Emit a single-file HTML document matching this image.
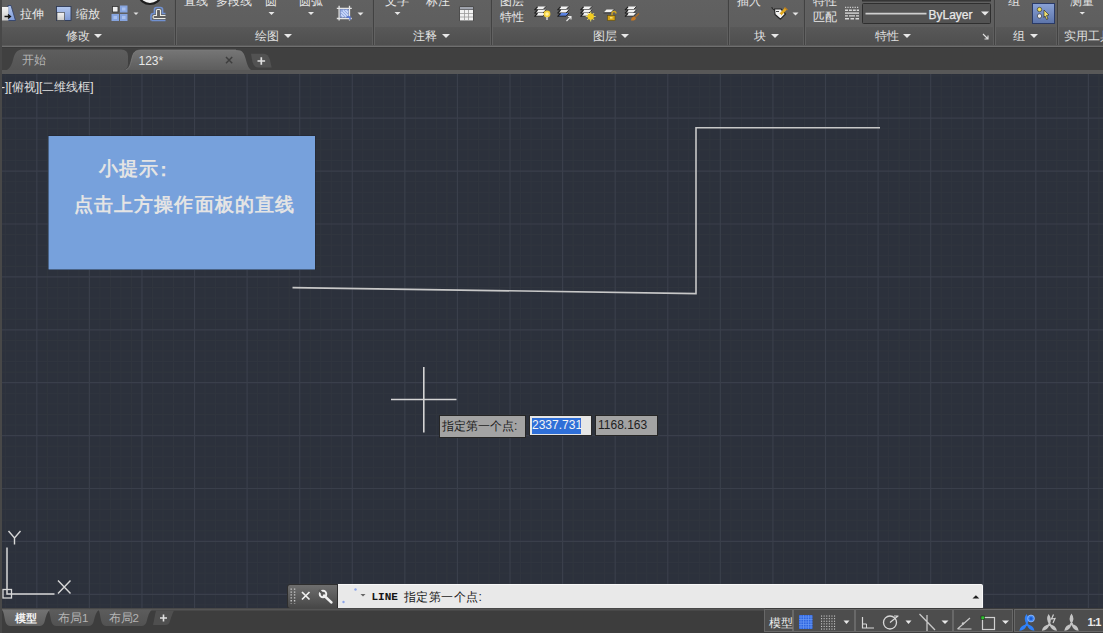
<!DOCTYPE html>
<html><head><meta charset="utf-8">
<style>
*{margin:0;padding:0;box-sizing:border-box}
html,body{width:1103px;height:633px;overflow:hidden;background:#2b303b;font-family:"Liberation Sans",sans-serif}
.a{position:absolute;white-space:nowrap}
#ribbon{position:absolute;left:0;top:0;width:1103px;height:46px;background:linear-gradient(#616161,#5c5c5c)}
#pbar{position:absolute;left:0;top:27px;width:1103px;height:18.5px;background:linear-gradient(#585858,#4e4e4e)}
#rline{position:absolute;left:0;top:45px;width:1103px;height:3px;background:linear-gradient(#5a5a5a 0,#5a5a5a 33%,#6f6f6f 33%,#6f6f6f 66%,#383838 66%)}
.sep{position:absolute;top:0;width:3px;height:45px;border-left:1px solid #5e5e5e;background:#424242;border-right:1px solid #626262}
.rt{color:#e6e6e6;font-size:12px;line-height:14px}
.pt{color:#e0e0e0;font-size:12px;line-height:14px}
.tri{position:absolute;width:0;height:0;border-left:4px solid transparent;border-right:4px solid transparent;border-top:4px solid #e8e8e8}
.tris{position:absolute;width:0;height:0;border-left:3px solid transparent;border-right:3px solid transparent;border-top:3px solid #e0e0e0}
#tabbar{position:absolute;left:0;top:47px;width:1103px;height:27px;background:#3e3e3e}
#draw{position:absolute;left:0;top:74px;width:1103px;height:535px}
#status{position:absolute;left:0;top:608px;width:1103px;height:25px;background:#3f3f3f}
</style></head><body>
<div id="ribbon"></div>
<div id="pbar"></div>
<div id="rline"></div>
<!-- separators -->
<div class="sep" style="left:174px"></div>
<div class="sep" style="left:372px"></div>
<div class="sep" style="left:490px"></div>
<div class="sep" style="left:727px"></div>
<div class="sep" style="left:803px"></div>
<div class="sep" style="left:993px"></div>
<div class="sep" style="left:1056px"></div>

<!-- ribbon top content -->
<svg class="a" style="left:0;top:0" width="1103" height="27" viewBox="0 0 1103 27">
<defs>
<linearGradient id="bl" x1="0" y1="0" x2="0" y2="1"><stop offset="0" stop-color="#b4c8ee"/><stop offset="1" stop-color="#7e9ad6"/></linearGradient>
<linearGradient id="wh" x1="0" y1="0" x2="0" y2="1"><stop offset="0" stop-color="#f4f4f4"/><stop offset="1" stop-color="#c8c8c8"/></linearGradient>
<linearGradient id="btn" x1="0" y1="0" x2="0" y2="1"><stop offset="0" stop-color="#8aa2d6"/><stop offset="1" stop-color="#5c74aa"/></linearGradient>
</defs>
<!-- stretch -->
<path d="M8 5.5 L11 5.5 L15.5 20.5 L8 20.5 Z" fill="url(#bl)" stroke="#2c3c66" stroke-width="0.8"/>
<rect x="1.5" y="7" width="7" height="13.5" fill="url(#wh)"/>
<path d="M4.5 16.5 H9.5 M8 14.5 L10.5 16.5 L8 18.5" stroke="#111" stroke-width="1.3" fill="none"/>
<!-- scale -->
<rect x="56.5" y="6.5" width="14.5" height="14" fill="url(#bl)" stroke="#2f3a55" stroke-width="0.9"/>
<rect x="57" y="12.5" width="7.5" height="8" fill="url(#wh)" stroke="#3a3a3a" stroke-width="0.6"/>
<!-- array -->
<rect x="112.5" y="6.5" width="5.5" height="5.5" fill="#eee" stroke="#333" stroke-width="0.8"/>
<rect x="120" y="5.5" width="7.5" height="7" fill="#86a4de"/><rect x="122" y="7.5" width="3.5" height="3" fill="#a8c0ee"/>
<rect x="111.5" y="14" width="7.5" height="7" fill="#86a4de"/><rect x="113.5" y="16" width="3.5" height="3" fill="#a8c0ee"/>
<rect x="120" y="14" width="7.5" height="7" fill="#86a4de"/><rect x="122" y="16" width="3.5" height="3" fill="#a8c0ee"/>
<path d="M133.5 12.5 H138.5 L136 15 Z" fill="#e0e0e0"/>
<!-- top circle (cut) -->
<ellipse cx="150" cy="-4" rx="10.2" ry="8" fill="#f4f4f4" stroke="#1e1e1e" stroke-width="2.2"/>
<!-- offset -->
<path d="M151 20.5 V16 Q151 13.5 153.5 13.5 H154.5 V9.5 Q154.5 7.5 156.5 7.5 H160.5 Q162.5 7.5 162.5 9.5 V13.5 H165.5 M151.5 20.5 H165.5" fill="none" stroke="#7090d0" stroke-width="1.7"/>
<path d="M165.5 18.5 H154.5 Q153 18.5 153 17 Q153 15.5 154.5 15.5 H156.5 V10.5 Q156.5 9.5 157.5 9.5 H159.5 Q160.5 9.5 160.5 10.5 V15.5 H165.5" fill="none" stroke="#ecece4" stroke-width="1.1"/>
<!-- draw panel arrows -->
<path d="M268.5 12 H274.5 L271.5 15 Z" fill="#e6e6e6"/>
<path d="M308 12 H314 L311 15 Z" fill="#e6e6e6"/>
<path d="M357.5 12.5 H363.5 L360.5 15.5 Z" fill="#e6e6e6"/>
<!-- hatch -->
<rect x="340" y="9" width="9" height="8.8" fill="#c4d2f6" stroke="#344a88" stroke-width="0.9"/>
<path d="M340.5 12 L343.5 9.5 M340.5 9.5 L348.5 17.5 M343.5 9.5 L348.5 14.5 M346.5 9.5 L348.5 11.5 M340.5 12.5 L345.5 17.5 M340.5 15.5 L342.5 17.5" stroke="#8ea6e0" stroke-width="0.9"/>
<path d="M336.8 8.3 H351.8 M336.8 18.5 H351.8 M339.1 5.8 V20.6 M349.5 5.8 V20.6" stroke="#e4e4e4" stroke-width="1.3"/>
<path d="M346.5 17 L350 17 L350 20" stroke="#5070d0" stroke-width="1.4" fill="none"/>
<!-- annot -->
<path d="M394.5 12 H400.5 L397.5 15 Z" fill="#e6e6e6"/>
<rect x="459.5" y="6.5" width="14" height="14.5" fill="#3c3c3c"/>
<rect x="460" y="7" width="13" height="2.5" fill="#a0a4ae"/>
<path d="M460 10 h13 v10.5 h-13 z" fill="#f2f2f2"/>
<path d="M464.5 10 V20.5 M468.5 10 V20.5 M460 13.5 H473 M460 17 H473" stroke="#9a9a9a" stroke-width="0.8"/>
<!-- layer icons -->
<path d="M535 9.7 L538 6.5 L546 6.5 L543 9.7 Z" fill="#f2f2f2"/><path d="M535 9.7 H543 L546 6.5" fill="none" stroke="#1c1c1c" stroke-width="0.9"/><path d="M534.5 10.1 L537.5 6.9" stroke="#1c1c1c" stroke-width="1.2"/><path d="M535 13.0 L538 9.8 L546 9.8 L543 13.0 Z" fill="#f2f2f2"/><path d="M535 13.0 H543 L546 9.8" fill="none" stroke="#1c1c1c" stroke-width="0.9"/><path d="M534.5 13.4 L537.5 10.200000000000001" stroke="#1c1c1c" stroke-width="1.2"/><path d="M535 16.2 L538 13 L546 13 L543 16.2 Z" fill="#f2f2f2"/><path d="M535 16.2 H543 L546 13" fill="none" stroke="#1c1c1c" stroke-width="0.9"/><path d="M534.5 16.6 L537.5 13.4" stroke="#1c1c1c" stroke-width="1.2"/><circle cx="547" cy="14" r="3.4" fill="#f3cf3a"/><circle cx="547" cy="14" r="1.8" fill="#fff2a0"/><path d="M547 17 V20" stroke="#e8e8e8" stroke-width="1.3"/><path d="M558 9.7 L561 6.5 L569 6.5 L566 9.7 Z" fill="#f2f2f2"/><path d="M558 9.7 H566 L569 6.5" fill="none" stroke="#1c1c1c" stroke-width="0.9"/><path d="M557.5 10.1 L560.5 6.9" stroke="#1c1c1c" stroke-width="1.2"/><path d="M558 13.0 L561 9.8 L569 9.8 L566 13.0 Z" fill="#f2f2f2"/><path d="M558 13.0 H566 L569 9.8" fill="none" stroke="#1c1c1c" stroke-width="0.9"/><path d="M557.5 13.4 L560.5 10.200000000000001" stroke="#1c1c1c" stroke-width="1.2"/><path d="M558 16.2 L561 13 L569 13 L566 16.2 Z" fill="#5a82e0"/><path d="M558 16.2 H566 L569 13" fill="none" stroke="#1c1c1c" stroke-width="0.9"/><path d="M557.5 16.6 L560.5 13.4" stroke="#1c1c1c" stroke-width="1.2"/><path d="M566.5 21 L570.5 17 M568 16.5 H571 V19.5" stroke="#e8e8e8" stroke-width="1.1" fill="none"/><path d="M581 9.7 L584 6.5 L592 6.5 L589 9.7 Z" fill="#f2f2f2"/><path d="M581 9.7 H589 L592 6.5" fill="none" stroke="#1c1c1c" stroke-width="0.9"/><path d="M580.5 10.1 L583.5 6.9" stroke="#1c1c1c" stroke-width="1.2"/><path d="M581 13.0 L584 9.8 L592 9.8 L589 13.0 Z" fill="#f2f2f2"/><path d="M581 13.0 H589 L592 9.8" fill="none" stroke="#1c1c1c" stroke-width="0.9"/><path d="M580.5 13.4 L583.5 10.200000000000001" stroke="#1c1c1c" stroke-width="1.2"/><path d="M581 16.2 L584 13 L592 13 L589 16.2 Z" fill="#f2f2f2"/><path d="M581 16.2 H589 L592 13" fill="none" stroke="#1c1c1c" stroke-width="0.9"/><path d="M580.5 16.6 L583.5 13.4" stroke="#1c1c1c" stroke-width="1.2"/><path d="M590.7 11.5 V21.5 M585.7 16.5 H595.7 M587.2 13 L594.2 20 M594.2 13 L587.2 20" stroke="#e8e070" stroke-width="0.9"/><circle cx="590.7" cy="16.5" r="3.2" fill="#f2cc20"/><path d="M603.5 12.8 L606.5 9.5 L614 9.5 L611 12.8 Z" fill="#f2f2f2"/><path d="M603.5 12.8 H611 L614 9.5" fill="none" stroke="#1c1c1c" stroke-width="0.9"/><path d="M612 15.5 V13.5 Q612 11.5 614 11.5 Q616 11.5 616 13.5" fill="none" stroke="#d4a820" stroke-width="1.3"/><rect x="607.5" y="15.5" width="7.5" height="5" fill="#d4a418" stroke="#5a4a10" stroke-width="0.6"/><rect x="610" y="17" width="2.5" height="1.6" fill="#f8e070"/><path d="M625.5 9.7 L628.5 6.5 L636.5 6.5 L633.5 9.7 Z" fill="#f2f2f2"/><path d="M625.5 9.7 H633.5 L636.5 6.5" fill="none" stroke="#1c1c1c" stroke-width="0.9"/><path d="M625.0 10.1 L628.0 6.9" stroke="#1c1c1c" stroke-width="1.2"/><path d="M625.5 13.0 L628.5 9.8 L636.5 9.8 L633.5 13.0 Z" fill="#f2f2f2"/><path d="M625.5 13.0 H633.5 L636.5 9.8" fill="none" stroke="#1c1c1c" stroke-width="0.9"/><path d="M625.0 13.4 L628.0 10.200000000000001" stroke="#1c1c1c" stroke-width="1.2"/><path d="M625.5 16.2 L628.5 13 L636.5 13 L633.5 16.2 Z" fill="#f2f2f2"/><path d="M625.5 16.2 H633.5 L636.5 13" fill="none" stroke="#1c1c1c" stroke-width="0.9"/><path d="M625.0 16.6 L628.0 13.4" stroke="#1c1c1c" stroke-width="1.2"/><path d="M631 20.5 Q631 17 634.5 16.5 L636 18 Q635.5 21 631 20.5 Z" fill="#c87820"/><path d="M635.5 17 L639 13.5" stroke="#a86a28" stroke-width="1.4"/>
<!-- insert block icon -->
<path d="M774.5 9 L781 9 L785.5 14 L780.5 19.2 L775 14.5 Z" fill="#f2f2f2" stroke="#262626" stroke-width="1.2" stroke-linejoin="round"/>
<path d="M771.8 7 Q772 9.5 774.2 10" stroke="#262626" stroke-width="1" fill="none"/>
<path d="M776 11.5 H779" stroke="#333" stroke-width="0.9"/>
<path d="M780.5 14.5 L786 8.5" stroke="#e0a820" stroke-width="2.6"/>
<path d="M784.5 7.5 L787.5 10" stroke="#b87a20" stroke-width="1.2"/>
<circle cx="780" cy="15" r="1" fill="#f0f0f0"/>
<path d="M792.5 12.5 H798.5 L795.5 15.5 Z" fill="#e6e6e6"/>
<!-- linetype icon -->
<path d="M845 7.4 H859" stroke="#d0d0d0" stroke-width="1.1" stroke-dasharray="1.2 1.2"/>
<path d="M845 10.2 H859" stroke="#d8d8d8" stroke-width="1.4" stroke-dasharray="3 0.9"/>
<path d="M845 13.1 H859" stroke="#d8d8d8" stroke-width="1.4"/>
<path d="M845 15.9 H848 M849 15.9 H855 M856 15.9 H859" stroke="#d8d8d8" stroke-width="1.4"/>
<path d="M845 18.7 H849 M850.5 18.7 H854 M855.5 18.7 H859" stroke="#d8d8d8" stroke-width="1.4"/>
<!-- dropdowns -->
<rect x="862.5" y="-4" width="128" height="5" fill="#3c3c3c" stroke="#2e2e2e"/>
<rect x="862.5" y="3.5" width="128" height="20" rx="1" fill="#535353" stroke="#2f2f2f"/>
<path d="M865.5 13.7 H926.5" stroke="#cfcfcf" stroke-width="1.8"/>
<path d="M981 11.5 H989 L985 15.5 Z" fill="#eaeaea"/>
<!-- group select button -->
<rect x="1032.5" y="3.5" width="22" height="20" fill="url(#btn)" stroke="#2a3a66" stroke-width="1"/>
<circle cx="1039.5" cy="9.5" r="2.2" fill="#f0e060" stroke="#222" stroke-width="0.6"/>
<circle cx="1039.5" cy="16" r="2.2" fill="#eee" stroke="#222" stroke-width="0.6"/>
<path d="M1044 10 L1049 15 L1046.5 15.5 L1048 19 L1046.5 19.5 L1045 16 L1044 17.5 Z" fill="#f0e070" stroke="#222" stroke-width="0.6"/>
<path d="M1079.5 12 H1085 L1082.25 14.5 Z" fill="#e6e6e6"/>
</svg>
<div class="a" style="left:20px;top:7px;font-size:12px;line-height:14px;color:#e8e8e8">拉伸</div>
<div class="a" style="left:76px;top:7px;font-size:12px;line-height:14px;color:#e8e8e8">缩放</div>
<div class="a" style="left:184px;top:-6.5px;font-size:12px;line-height:14px;color:#e8e8e8">直线</div>
<div class="a" style="left:216px;top:-6.5px;font-size:12px;line-height:14px;color:#e8e8e8">多段线</div>
<div class="a" style="left:265px;top:-6.5px;font-size:12px;line-height:14px;color:#e8e8e8">圆</div>
<div class="a" style="left:299px;top:-6.5px;font-size:12px;line-height:14px;color:#e8e8e8">圆弧</div>
<div class="a" style="left:385px;top:-6.5px;font-size:12px;line-height:14px;color:#e8e8e8">文字</div>
<div class="a" style="left:426px;top:-6.5px;font-size:12px;line-height:14px;color:#e8e8e8">标注</div>
<div class="a" style="left:500px;top:-6.5px;font-size:12px;line-height:14px;color:#e8e8e8">图层</div>
<div class="a" style="left:500px;top:10px;font-size:12px;line-height:14px;color:#e8e8e8">特性</div>
<div class="a" style="left:737px;top:-6.5px;font-size:12px;line-height:14px;color:#e8e8e8">插入</div>
<div class="a" style="left:813px;top:-6.5px;font-size:12px;line-height:14px;color:#e8e8e8">特性</div>
<div class="a" style="left:813px;top:10px;font-size:12px;line-height:14px;color:#e8e8e8">匹配</div>
<div class="a" style="left:928.5px;top:7.5px;font-size:12px;line-height:15px;color:#e8e8e8;-webkit-text-stroke:0.25px #e8e8e8">ByLayer</div>
<div class="a" style="left:1008px;top:-6.5px;font-size:12px;line-height:14px;color:#e8e8e8">组</div>
<div class="a" style="left:1070px;top:-6.5px;font-size:12px;line-height:14px;color:#e8e8e8">测量</div>
<svg class="a" style="left:982px;top:33px" width="8" height="8" viewBox="0 0 8 8"><path d="M1 1 L6 6 M6 2.5 V6 H2.5" stroke="#e0e0e0" stroke-width="1.1" fill="none"/></svg>

<!-- panel titles -->
<div class="a pt" style="left:66px;top:29px">修改</div><div class="tri" style="left:94px;top:34px"></div>
<div class="a pt" style="left:255px;top:29px">绘图</div><div class="tri" style="left:284px;top:34px"></div>
<div class="a pt" style="left:413px;top:29px">注释</div><div class="tri" style="left:442px;top:34px"></div>
<div class="a pt" style="left:593px;top:29px">图层</div><div class="tri" style="left:621px;top:34px"></div>
<div class="a pt" style="left:754px;top:29px">块</div><div class="tri" style="left:771px;top:34px"></div>
<div class="a pt" style="left:875px;top:29px">特性</div><div class="tri" style="left:903px;top:34px"></div>
<div class="a pt" style="left:1013px;top:29px">组</div><div class="tri" style="left:1030px;top:34px"></div>
<div class="a pt" style="left:1064px;top:29px">实用工具</div>

<svg class="a" style="left:0;top:47px" width="1103" height="27" viewBox="0 47 1103 27">
<defs>
<linearGradient id="tg1" x1="0" y1="0" x2="0" y2="1"><stop offset="0" stop-color="#5e5e5e"/><stop offset="1" stop-color="#545454"/></linearGradient>
<linearGradient id="tg2" x1="0" y1="0" x2="0" y2="1"><stop offset="0" stop-color="#767676"/><stop offset="1" stop-color="#5c5c5c"/></linearGradient>
</defs>
<rect x="0" y="47" width="1103" height="27" fill="#404040"/><rect x="0" y="47" width="1103" height="1" fill="#393939"/>
<path d="M1 71 C8 71 11 68 13 60 C15 52 17 49.5 24 49.5 L121 49.5 Q128 49.5 128 56 L128 64 Q128 70.5 121 70.5 Z" fill="url(#tg1)"/>
<path d="M121 71 C129 71 130 66 132 58 C133.5 52 135 50 142 50 L236 50 C243 50 244 53 246 60 C248 68 250 71 256 71 Z" fill="url(#tg2)"/>
<path d="M121 71 C129 71 130 66 132 58 C133.5 52 135 50 142 50 L236 50" fill="none" stroke="#7e7e7e" stroke-width="0.8"/>
<path d="M251 53.8 L264 53.8 Q268 53.8 270 60 L271.6 67.6 L258 67.6 Q254 67.6 252.5 62 Z" fill="#525252"/>
<rect x="0" y="70" width="1103" height="4" fill="#585858"/>
</svg>
<div class="a" style="left:22px;top:53px;font-size:12px;line-height:14px;color:#b4b4b4">开始</div>
<div class="a" style="left:138.5px;top:54px;font-size:12px;line-height:14px;color:#e8e8e8">123*</div>
<svg class="a" style="left:224px;top:55px" width="10" height="10" viewBox="0 0 10 10"><path d="M2 2L8.2 8.2M8.2 2L2 8.2" stroke="#3e3e3e" stroke-width="1.5"/></svg>
<svg class="a" style="left:256px;top:56px" width="10" height="10" viewBox="0 0 10 10"><path d="M5.3 1.2V8.8M1.5 5H9.1" stroke="#e0e0e0" stroke-width="1.7"/></svg>

<svg id="draw" width="1103" height="535" viewBox="0 0 1103 535">
<rect width="1103" height="535" fill="#2c313c"/>
<path d="M5.25 0V535M15.77 0V535M26.28 0V535M47.32 0V535M57.83 0V535M68.35 0V535M78.86 0V535M99.90 0V535M110.41 0V535M120.93 0V535M131.44 0V535M152.48 0V535M162.99 0V535M173.51 0V535M184.02 0V535M205.06 0V535M215.57 0V535M226.09 0V535M236.60 0V535M257.64 0V535M268.15 0V535M278.67 0V535M289.18 0V535M310.22 0V535M320.73 0V535M331.25 0V535M341.76 0V535M362.80 0V535M373.31 0V535M383.83 0V535M394.34 0V535M415.38 0V535M425.89 0V535M436.41 0V535M446.92 0V535M467.96 0V535M478.47 0V535M488.99 0V535M499.50 0V535M520.54 0V535M531.05 0V535M541.57 0V535M552.08 0V535M573.12 0V535M583.63 0V535M594.15 0V535M604.66 0V535M625.70 0V535M636.21 0V535M646.73 0V535M657.24 0V535M678.28 0V535M688.79 0V535M699.31 0V535M709.82 0V535M730.86 0V535M741.37 0V535M751.89 0V535M762.40 0V535M783.44 0V535M793.95 0V535M804.47 0V535M814.98 0V535M836.02 0V535M846.53 0V535M857.05 0V535M867.56 0V535M888.60 0V535M899.11 0V535M909.63 0V535M920.14 0V535M941.18 0V535M951.69 0V535M962.21 0V535M972.72 0V535M993.76 0V535M1004.27 0V535M1014.79 0V535M1025.30 0V535M1046.34 0V535M1056.85 0V535M1067.37 0V535M1077.88 0V535M1098.92 0V535M0 1.88H1103M0 12.46H1103M0 23.04H1103M0 33.62H1103M0 54.78H1103M0 65.36H1103M0 75.94H1103M0 86.52H1103M0 107.68H1103M0 118.26H1103M0 128.84H1103M0 139.42H1103M0 160.58H1103M0 171.16H1103M0 181.74H1103M0 192.32H1103M0 213.48H1103M0 224.06H1103M0 234.64H1103M0 245.22H1103M0 266.38H1103M0 276.96H1103M0 287.54H1103M0 298.12H1103M0 319.28H1103M0 329.86H1103M0 340.44H1103M0 351.02H1103M0 372.18H1103M0 382.76H1103M0 393.34H1103M0 403.92H1103M0 425.08H1103M0 435.66H1103M0 446.24H1103M0 456.82H1103M0 477.98H1103M0 488.56H1103M0 499.14H1103M0 509.72H1103M0 530.88H1103" stroke="#31363f" stroke-width="1" fill="none"/>
<path d="M36.80 0V535M89.38 0V535M141.96 0V535M194.54 0V535M247.12 0V535M299.70 0V535M352.28 0V535M404.86 0V535M457.44 0V535M510.02 0V535M562.60 0V535M615.18 0V535M667.76 0V535M720.34 0V535M772.92 0V535M825.50 0V535M878.08 0V535M930.66 0V535M983.24 0V535M1035.82 0V535M1088.40 0V535M0 44.20H1103M0 97.10H1103M0 150.00H1103M0 202.90H1103M0 255.80H1103M0 308.70H1103M0 361.60H1103M0 414.50H1103M0 467.40H1103M0 520.30H1103" stroke="#3a3f4b" stroke-width="1.2" fill="none"/>
<rect x="0" y="0" width="2" height="535" fill="#4a4a4a"/>
</svg>
<!-- drawing content (page coords) -->
<svg class="a" style="left:0;top:74px" width="1103" height="535" viewBox="0 74 1103 535">
<rect x="48" y="135.5" width="267.5" height="134.5" fill="#1f2530"/><rect x="48.5" y="136" width="266.5" height="133.5" fill="#77a1dc"/>
<polyline points="292.5,287.6 696,293.6 696,127.8 880,127.8" fill="none" stroke="#c8c8c8" stroke-width="1.6"/>
<path d="M423.8 367 V432.5 M391 399.5 H456.5" stroke="#d4d4d4" stroke-width="1.6"/>
<!-- UCS -->
<path d="M7 547.5 V594 H54.5" stroke="#d8d8d8" stroke-width="1.5" fill="none"/>
<rect x="3" y="589.5" width="8.5" height="8.5" fill="none" stroke="#d8d8d8" stroke-width="1.3"/>
<path d="M8.5 531 L14.5 538 L20.5 531 M14.5 538 V544.5" stroke="#d8d8d8" stroke-width="1.4" fill="none"/>
<path d="M58 580.5 L70.5 593.5 M70.5 580.5 L58 593.5" stroke="#d8d8d8" stroke-width="1.4" fill="none"/>
</svg>
<div class="a" style="left:99px;top:158px;font-size:18.5px;line-height:22px;color:#e4e4e4;font-weight:bold;letter-spacing:1.2px">小提示</div><div class="a" style="left:154px;top:159px;font-size:18.5px;line-height:22px;color:#e4e4e4;font-weight:bold">：</div>
<div class="a" style="left:74px;top:194px;font-size:18.5px;line-height:22px;color:#e4e4e4;font-weight:bold;letter-spacing:1.1px">点击上方操作面板的直线</div>
<div class="a" style="left:1px;top:80px;font-size:12px;line-height:14px;color:#e0e0e0">-][俯视][二维线框]</div>
<!-- dynamic input -->
<div class="a" style="left:438.5px;top:415px;width:87px;height:23px;background:#a3a3a3;border:1px solid #262626"></div>
<div class="a" style="left:442px;top:418px;font-size:12px;line-height:16px;color:#1e1e1e">指定第一个点:</div>
<div class="a" style="left:529px;top:415px;width:63px;height:21px;background:#e6e6e6;border:1px solid #2a2a2a"></div>
<div class="a" style="left:532px;top:417.5px;width:49px;height:16px;background:#2f6fd8"></div>
<div class="a" style="left:532px;top:418px;font-size:12px;line-height:15px;color:#f4f4f4">2337.731</div>
<div class="a" style="left:594.5px;top:415px;width:63px;height:21px;background:#a3a3a3;border:1px solid #262626"></div>
<div class="a" style="left:598px;top:418px;font-size:12px;line-height:15px;color:#1e1e1e">1168.163</div>
<!-- command line -->
<div class="a" style="left:287px;top:584px;width:51px;height:24.5px;background:linear-gradient(#6e6e6e,#474747);border:1px solid #2e2e2e;border-radius:3px 0 0 3px"></div>
<svg class="a" style="left:287px;top:584px" width="52" height="25" viewBox="0 0 52 25">
<path d="M4.2 4.5 V19.5 M7.6 4.5 V19.5" stroke="#c8c8c8" stroke-width="1.4" stroke-dasharray="1.3 1.6"/>
<path d="M15 8 L22.5 15.5 M22.5 8 L15 15.5" stroke="#f0f0f0" stroke-width="1.7"/>
<path d="M37 11.5 L44.5 18.5" stroke="#f0f0f0" stroke-width="2.4" stroke-linecap="round"/>
<circle cx="36" cy="10" r="3.3" fill="none" stroke="#f0f0f0" stroke-width="1.9"/>
<path d="M36 10 L32 6" stroke="#575757" stroke-width="2.4"/>
</svg>
<div class="a" style="left:338px;top:584px;width:645px;height:24.5px;background:#e9e9e9;border:1px solid #f8f8f8;border-left:none;border-radius:0 2px 2px 0"></div>
<svg class="a" style="left:338px;top:584px" width="40" height="25" viewBox="0 0 40 25">
<circle cx="17.5" cy="5.5" r="1.2" fill="#8ea6e8"/><circle cx="5.5" cy="18" r="1.2" fill="#8ea6e8"/>
<path d="M22.5 10 H27.5 L25 12.5 Z" fill="#666"/>
</svg>
<div class="a" style="left:371.5px;top:590px;font-family:'Liberation Mono',monospace;font-size:11px;line-height:14px;color:#141414;font-weight:bold">LINE</div><div class="a" style="left:403.5px;top:589.5px;font-size:12px;line-height:14px;color:#1a1a1a;letter-spacing:0.5px">指定第一个点:</div>
<svg class="a" style="left:971px;top:592.5px" width="10" height="7" viewBox="0 0 10 7"><path d="M1.5 5.6 H8.3 L4.9 2.2 Z" fill="#1e1e1e"/></svg>

<svg class="a" style="left:0;top:608px" width="1103" height="25" viewBox="0 608 1103 25">
<defs>
<linearGradient id="lt1" x1="0" y1="0" x2="0" y2="1"><stop offset="0" stop-color="#727272"/><stop offset="1" stop-color="#5e5e5e"/></linearGradient>
<linearGradient id="lt2" x1="0" y1="0" x2="0" y2="1"><stop offset="0" stop-color="#5c5c5c"/><stop offset="1" stop-color="#525252"/></linearGradient>
</defs>
<rect x="0" y="608" width="1103" height="25" fill="#3d3d3d"/>
<rect x="0" y="608.5" width="765" height="2" fill="#555"/>
<rect x="0" y="608" width="2" height="25" fill="#4a4a4a"/>
<path d="M48 609.5 L99 609.5 C96 612 95 616 94 620 C93 624 92 626 87 626 L58 626 C53 626 52 624 51 620 C50 616 50 612 48 609.5 Z" fill="url(#lt2)"/>
<path d="M98.5 609.5 L152 609.5 C149 612 148 616 147 620 C146 624 145 626 140 626 L108 626 C103 626 102 624 101 620 C100 616 100 612 98.5 609.5 Z" fill="url(#lt2)"/>
<path d="M2 609.5 L50 609.5 C47 612 46 616 45 620 C44 624 43 626 38 626 L12 626 C7 626 6 624 5 620 C4 616 4 612 2 609.5 Z" fill="url(#lt1)"/>
<path d="M156 610.5 L174 610.5 C172 614 171 618 170 621 C169 624 168 625 165 625 L153 625 C154 621 155 614 156 610.5 Z" fill="#4f4f4f"/>
<!-- status segments -->
<rect x="764.5" y="609.5" width="28" height="22" fill="#4d4d4d" stroke="#686868"/>
<rect x="793.5" y="609.5" width="61" height="22" fill="#4d4d4d" stroke="#686868"/>
<rect x="855.5" y="609.5" width="97" height="22" fill="#4d4d4d" stroke="#686868"/>
<rect x="953.5" y="609.5" width="59" height="22" fill="#4d4d4d" stroke="#686868"/>
<rect x="1014.5" y="609.5" width="89" height="22" fill="#4d4d4d" stroke="#686868"/>
<!-- blue grid -->
<rect x="799" y="615" width="13.5" height="14" fill="#2e66e0"/>
<path d="M801 615V629M803.5 615V629M806 615V629M808.5 615V629M811 615V629M799 617H812.5M799 619.5H812.5M799 622H812.5M799 624.5H812.5M799 627H812.5" stroke="#6a9af4" stroke-width="0.7"/>
<!-- dots grid -->
<g fill="#c8c8c8">
<rect x="821.0" y="615.5" width="1.1" height="1.1"/><rect x="821.0" y="618.1" width="1.1" height="1.1"/><rect x="821.0" y="620.7" width="1.1" height="1.1"/><rect x="821.0" y="623.3" width="1.1" height="1.1"/><rect x="821.0" y="625.9" width="1.1" height="1.1"/><rect x="821.0" y="628.5" width="1.1" height="1.1"/><rect x="823.6" y="615.5" width="1.1" height="1.1"/><rect x="823.6" y="618.1" width="1.1" height="1.1"/><rect x="823.6" y="620.7" width="1.1" height="1.1"/><rect x="823.6" y="623.3" width="1.1" height="1.1"/><rect x="823.6" y="625.9" width="1.1" height="1.1"/><rect x="823.6" y="628.5" width="1.1" height="1.1"/><rect x="826.2" y="615.5" width="1.1" height="1.1"/><rect x="826.2" y="618.1" width="1.1" height="1.1"/><rect x="826.2" y="620.7" width="1.1" height="1.1"/><rect x="826.2" y="623.3" width="1.1" height="1.1"/><rect x="826.2" y="625.9" width="1.1" height="1.1"/><rect x="826.2" y="628.5" width="1.1" height="1.1"/><rect x="828.8" y="615.5" width="1.1" height="1.1"/><rect x="828.8" y="618.1" width="1.1" height="1.1"/><rect x="828.8" y="620.7" width="1.1" height="1.1"/><rect x="828.8" y="623.3" width="1.1" height="1.1"/><rect x="828.8" y="625.9" width="1.1" height="1.1"/><rect x="828.8" y="628.5" width="1.1" height="1.1"/><rect x="831.4" y="615.5" width="1.1" height="1.1"/><rect x="831.4" y="618.1" width="1.1" height="1.1"/><rect x="831.4" y="620.7" width="1.1" height="1.1"/><rect x="831.4" y="623.3" width="1.1" height="1.1"/><rect x="831.4" y="625.9" width="1.1" height="1.1"/><rect x="831.4" y="628.5" width="1.1" height="1.1"/><rect x="834.0" y="615.5" width="1.1" height="1.1"/><rect x="834.0" y="618.1" width="1.1" height="1.1"/><rect x="834.0" y="620.7" width="1.1" height="1.1"/><rect x="834.0" y="623.3" width="1.1" height="1.1"/><rect x="834.0" y="625.9" width="1.1" height="1.1"/><rect x="834.0" y="628.5" width="1.1" height="1.1"/>
</g>
<path d="M843.5 620.5 H849.5 L846.5 624 Z" fill="#e8e8e8"/>
<path d="M862.5 617 V628 H874" stroke="#d8d8d8" stroke-width="1.2" fill="none"/>
<path d="M862.5 624 H866.5 V628" stroke="#d8d8d8" stroke-width="1" fill="none"/>
<circle cx="890" cy="622.5" r="6.5" fill="none" stroke="#d8d8d8" stroke-width="1.3"/>
<path d="M890 622.5 L898 616 M894 616 H898.5" stroke="#d8d8d8" stroke-width="1.2" fill="none"/>
<path d="M905.5 620.5 H911.5 L908.5 624 Z" fill="#e8e8e8"/>
<path d="M919.5 614 L935 630 M927 615 V631" stroke="#c8c8c8" stroke-width="1.3"/>
<path d="M941.5 620.5 H948.5 L945 624 Z" fill="#e8e8e8"/>
<path d="M957.5 629 H971.5 M957.5 629 L970 618" stroke="#c8c8c8" stroke-width="1.2"/>
<circle cx="963" cy="623.5" r="1.2" fill="#c8c8c8"/>
<rect x="982.5" y="617.5" width="12" height="12" fill="none" stroke="#d0d0d0" stroke-width="1.2"/>
<rect x="981" y="616" width="3.5" height="3.5" fill="#30c030" stroke="#111" stroke-width="0.5"/>
<path d="M1002 620.5 H1009 L1005.5 624 Z" fill="#e8e8e8"/>
<!-- annotation icons -->
<path d="M1026.90 624.50 Q1030.45 619.07 1026.40 614.00 Q1022.85 619.43 1026.90 624.50 Z M1026.90 624.50 Q1020.67 624.72 1019.30 630.80 Q1025.53 630.58 1026.90 624.50 Z M1026.90 624.50 Q1028.27 630.58 1034.50 630.80 Q1033.13 624.72 1026.90 624.50 Z " fill="#2f80f8"/><circle cx="1026.9" cy="624.5" r="1.6" fill="#2f80f8"/><circle cx="1031" cy="618.5" r="3.4" fill="#3a84f2" stroke="#8cb8ff" stroke-width="0.9"/><circle cx="1031" cy="618.5" r="1.5" fill="#1c5cd0"/><path d="M1049.50 624.50 Q1052.78 618.89 1048.50 614.00 Q1045.22 619.61 1049.50 624.50 Z M1049.50 624.50 Q1043.24 624.71 1041.80 630.80 Q1048.06 630.59 1049.50 624.50 Z M1049.50 624.50 Q1050.81 630.56 1057.00 630.80 Q1055.69 624.74 1049.50 624.50 Z " fill="#c4c4c4"/><circle cx="1049.5" cy="624.5" r="1.6" fill="#c4c4c4"/><path d="M1053.5 614.5 L1051.5 619 L1055 618.5 L1053 623" stroke="#d0d0d0" stroke-width="1.2" fill="none"/><path d="M1071.50 624.00 Q1075.30 618.75 1071.50 613.50 Q1067.70 618.75 1071.50 624.00 Z M1071.50 624.00 Q1065.29 624.64 1064.30 630.80 Q1070.51 630.16 1071.50 624.00 Z M1071.50 624.00 Q1072.49 630.16 1078.70 630.80 Q1077.71 624.64 1071.50 624.00 Z " fill="#c4c4c4"/><circle cx="1071.5" cy="624" r="1.6" fill="#c4c4c4"/>
</svg>
<div class="a" style="left:14.5px;top:612px;font-size:11px;line-height:13px;color:#f4f4f4;font-weight:bold">模型</div>
<div class="a" style="left:58px;top:612px;font-size:11.5px;line-height:13px;color:#b4b4b4">布局1</div>
<div class="a" style="left:108.5px;top:612px;font-size:11.5px;line-height:13px;color:#b4b4b4">布局2</div>
<svg class="a" style="left:159px;top:613px" width="10" height="10" viewBox="0 0 10 10"><path d="M4.5 1.5V8.5M1 5H8" stroke="#e0e0e0" stroke-width="1.6"/></svg>
<div class="a" style="left:768.5px;top:615.5px;font-size:12px;line-height:14px;color:#ececec">模型</div>
<div class="a" style="left:1087.5px;top:615.5px;font-size:11px;line-height:13px;color:#ececec;font-weight:bold;letter-spacing:-1px">1:1</div>

<div class="a" style="left:0;top:0;width:2px;height:633px;background:#484848"></div>
</body></html>
